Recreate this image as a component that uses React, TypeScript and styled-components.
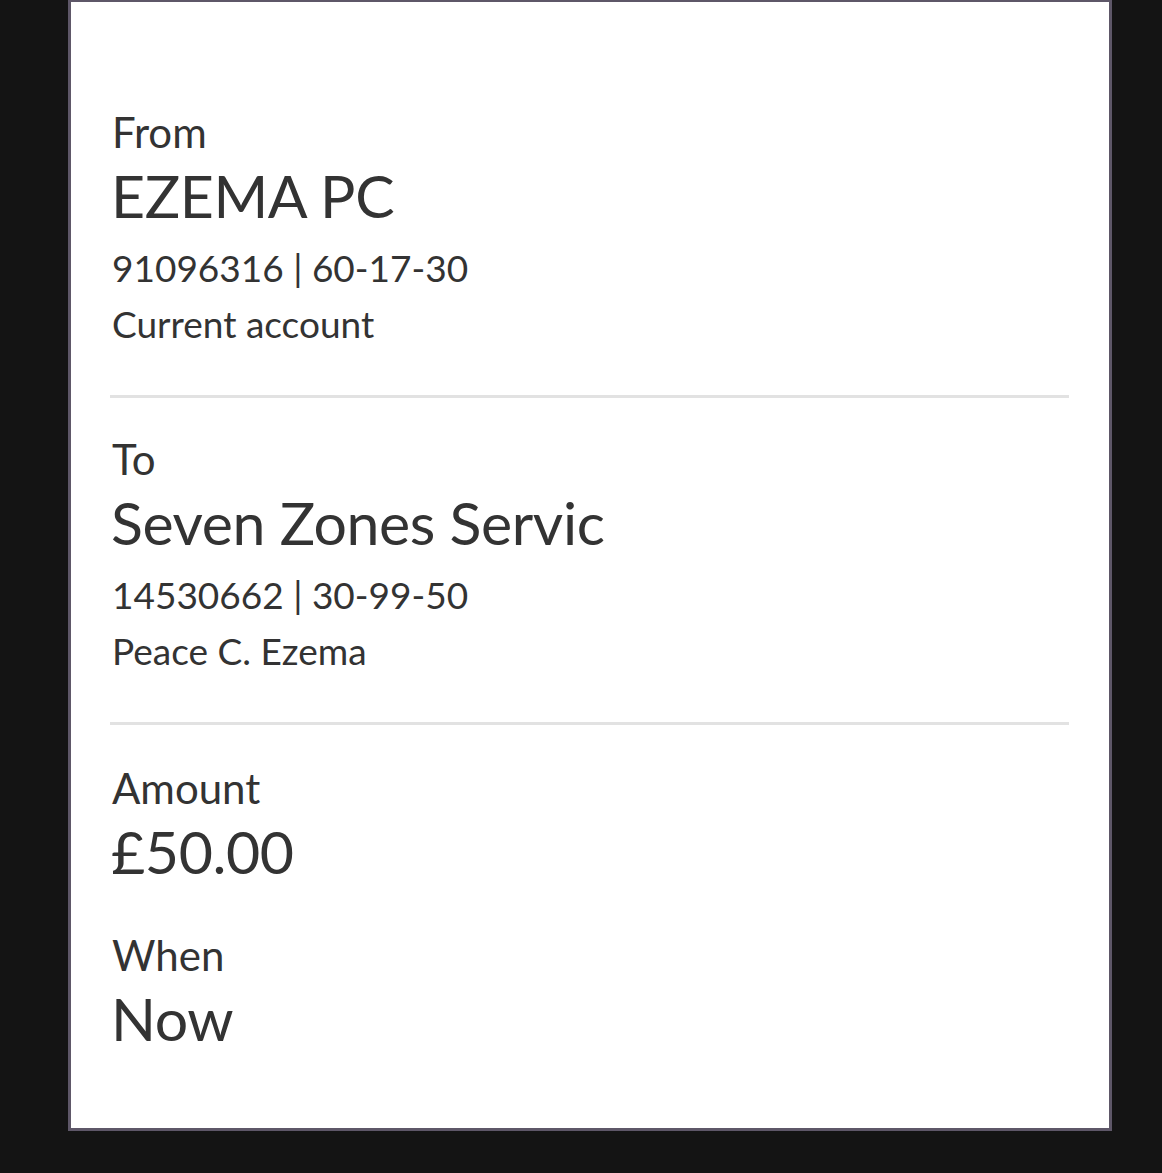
import React from "react";
import styled, { createGlobalStyle } from "styled-components";

const Global = createGlobalStyle`
  html, body {
    margin: 0;
    padding: 0;
    background: #141414;
  }
  body {
    font-family: Lato, "Noto Sans", "Liberation Sans", sans-serif;
    color: #333333;
  }
`;

const Page = styled.div`
  min-height: 1173px;
  padding-left: 68px;
  box-sizing: border-box;
`;

const Card = styled.div`
  width: 1044px;
  box-sizing: border-box;
  background: #ffffff;
  border: 3px solid #5e5768;
  border-top-width: 2px;
  padding: 0 40px 73px 39px;
`;

const Section = styled.section<{ $top: number; $bottom: number; $divider?: boolean }>`
  padding-top: ${(p) => p.$top}px;
  padding-bottom: ${(p) => p.$bottom}px;
  border-bottom: ${(p) => (p.$divider ? "3px solid #e2e2e2" : "none")};
`;

const Label = styled.div`
  font-size: 42px;
  line-height: 56px;
  padding-left: 2px;
`;

const Value = styled.div`
  font-size: 59px;
  line-height: 72px;
  letter-spacing: -0.4px;
  padding-left: 1px;
`;

const Detail = styled.div<{ $first?: boolean }>`
  font-size: 37px;
  line-height: 56px;
  margin-top: ${(p) => (p.$first ? 8 : 0)}px;
  padding-left: 2px;
`;

const Field = styled.div<{ $gap?: number }>`
  margin-top: ${(p) => p.$gap ?? 0}px;
`;

export default function App() {
  return (
    <>
      <Global />
      <Page>
        <Card>
          <Section $top={102} $bottom={43} $divider>
            <Label>From</Label>
            <Value>EZEMA PC</Value>
            <Detail $first>91096316 | 60-17-30</Detail>
            <Detail>Current account</Detail>
          </Section>
          <Section $top={33} $bottom={43} $divider>
            <Label>To</Label>
            <Value>Seven Zones Servic</Value>
            <Detail $first>14530662 | 30-99-50</Detail>
            <Detail>Peace C. Ezema</Detail>
          </Section>
          <Section $top={35} $bottom={0}>
            <Field>
              <Label>Amount</Label>
              <Value>£50.00</Value>
            </Field>
            <Field $gap={39}>
              <Label>When</Label>
              <Value>Now</Value>
            </Field>
          </Section>
        </Card>
      </Page>
    </>
  );
}
